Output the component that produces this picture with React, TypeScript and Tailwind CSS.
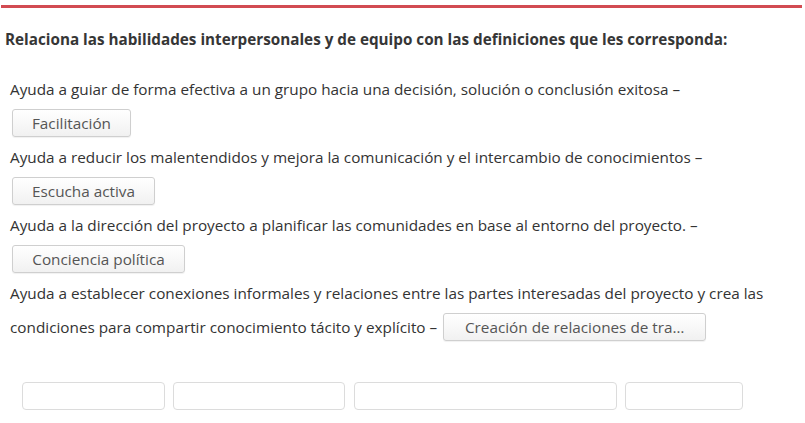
import React from "react";

function Chip({ w, children }: { w: string; children: React.ReactNode }) {
  return (
    <span
      className={`inline-block ${w} h-[28px] rounded-[3px] border border-[#cfcfcf] bg-gradient-to-b from-white to-[#f1f1f1] text-center leading-[26px] text-[#555] shadow-[0_1px_1px_rgba(0,0,0,0.06)] whitespace-nowrap`}
    >
      {children}
    </span>
  );
}

function Row({ children, className = "" }: { children: React.ReactNode; className?: string }) {
  return <div className={`flex items-center h-[34px] ${className}`}>{children}</div>;
}

export default function App() {
  return (
    <div
      className="w-[805px] h-[423px] bg-white overflow-hidden text-[15.3px] text-[#333]"
      style={{ fontFamily: '"Open Sans", "Liberation Sans", sans-serif' }}
    >
      <div className="ml-[1px] mt-[5px] h-[3px] w-[801px] bg-[#d24b52]" />
      <div className="mt-[21px] pl-[5px] leading-[20px] font-bold text-[15.25px] text-[#363636] whitespace-nowrap">
        Relaciona las habilidades interpersonales y de equipo con las definiciones que les corresponda:
      </div>
      <div className="mt-[23px] pl-[10px] leading-[34px] whitespace-nowrap">
        <Row>
          Ayuda a guiar de forma efectiva a un grupo hacia una decisión, solución o conclusión exitosa –
        </Row>
        <Row className="pl-[2px]">
          <Chip w="w-[119px]">Facilitación</Chip>
        </Row>
        <Row>
          Ayuda a reducir los malentendidos y mejora la comunicación y el intercambio de conocimientos –
        </Row>
        <Row className="pl-[2px]">
          <Chip w="w-[143px]">Escucha activa</Chip>
        </Row>
        <Row>
          Ayuda a la dirección del proyecto a planificar las comunidades en base al entorno del proyecto. –
        </Row>
        <Row className="pl-[2px]">
          <Chip w="w-[173px]">Conciencia política</Chip>
        </Row>
        <Row>
          Ayuda a establecer conexiones informales y relaciones entre las partes interesadas del proyecto y crea las
        </Row>
        <Row>
          <span>condiciones para compartir conocimiento tácito y explícito –</span>
          <span className="ml-[6px]">
            <Chip w="w-[263px]">Creación de relaciones de tra…</Chip>
          </span>
        </Row>
      </div>
      <div className="mt-[38px] pl-[22px] flex">
        <div className="w-[143px] h-[28px] rounded-[4px] border border-[#dcdcdc] bg-white" />
        <div className="ml-[8px] w-[172px] h-[28px] rounded-[4px] border border-[#dcdcdc] bg-white" />
        <div className="ml-[9px] w-[263px] h-[28px] rounded-[4px] border border-[#dcdcdc] bg-white" />
        <div className="ml-[8px] w-[118px] h-[28px] rounded-[4px] border border-[#dcdcdc] bg-white" />
      </div>
    </div>
  );
}
